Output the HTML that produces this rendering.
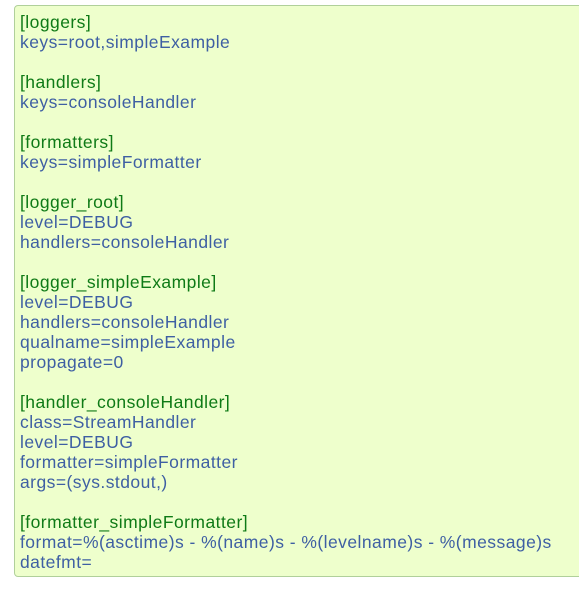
<!DOCTYPE html>
<html><head><style>
html,body{margin:0;padding:0;background:#fff;width:579px;height:590px;overflow:hidden}
.box{position:absolute;left:14px;top:5px;width:580px;height:572px;box-sizing:border-box;background:#eeffcc;border:1px solid #b0d09a;border-radius:4px;}
pre{margin:0;position:absolute;left:20px;top:12px;font-family:"Liberation Sans",sans-serif;font-size:17.5px;letter-spacing:0.45px;line-height:20px;color:#3e5fa3;white-space:pre}
.g{color:#0e7a16}
</style></head><body>
<div class="box"></div>
<pre><span class="g">[loggers]</span>
keys=root,simpleExample

<span class="g">[handlers]</span>
keys=consoleHandler

<span class="g">[formatters]</span>
keys=simpleFormatter

<span class="g">[logger_root]</span>
level=DEBUG
handlers=consoleHandler

<span class="g">[logger_simpleExample]</span>
level=DEBUG
handlers=consoleHandler
qualname=simpleExample
propagate=0

<span class="g">[handler_consoleHandler]</span>
class=StreamHandler
level=DEBUG
formatter=simpleFormatter
args=(sys.stdout,)

<span class="g">[formatter_simpleFormatter]</span>
format=%(asctime)s - %(name)s - %(levelname)s - %(message)s
datefmt=</pre>
</body></html>
